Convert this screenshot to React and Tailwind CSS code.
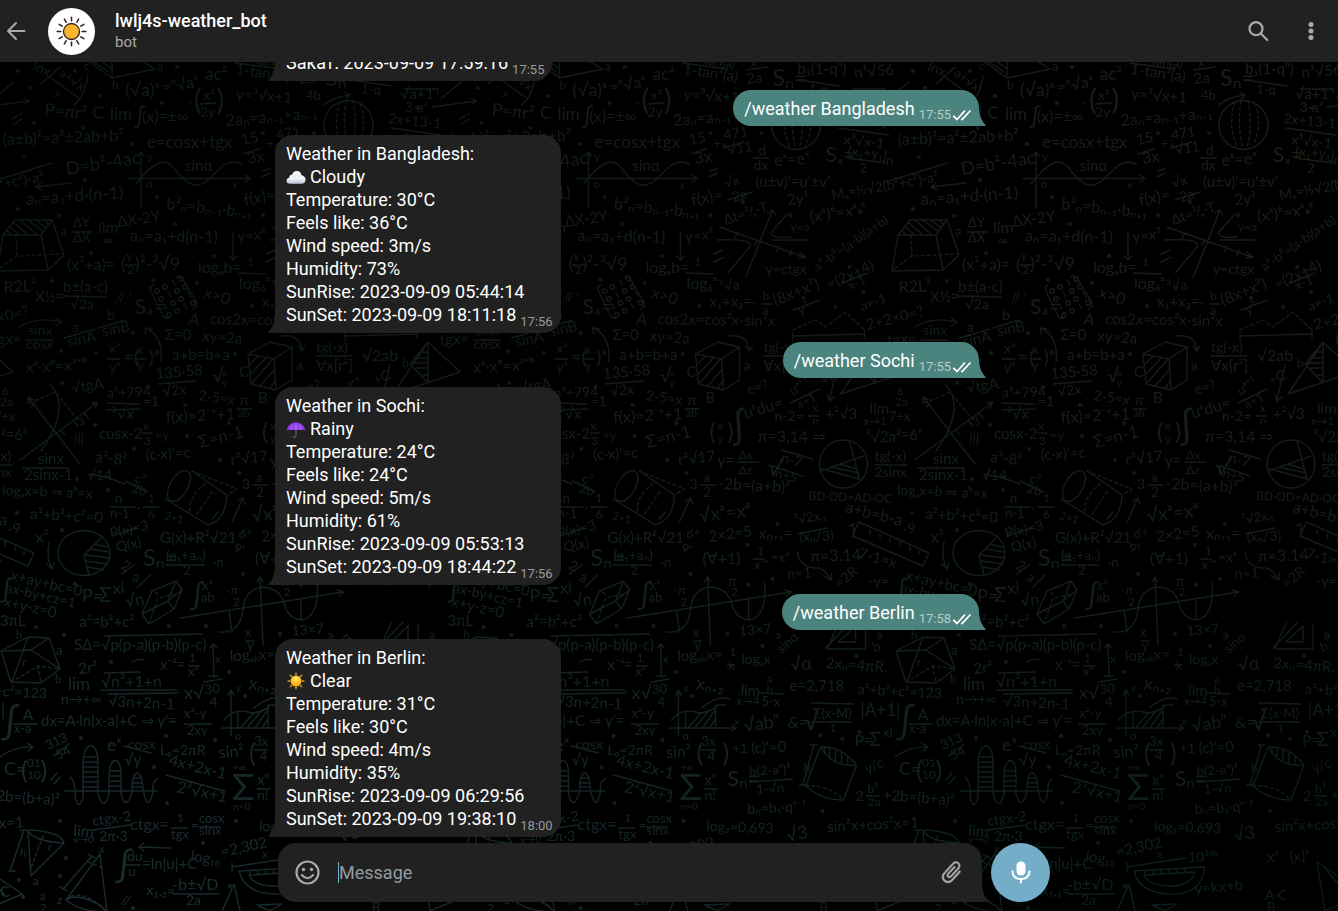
import React from "react";

const TILE = 447.5;

// Wallpaper formulas: [x, baseline, text, size, rotation]
const FORMULAS = [
  [32, 8, "lnx", 13, 22], [58, 13, "a+√x", 12, 36], [55, 35, "x", 11], [157, 9, "a", 12], [112, 27, "b", 11], [84, 8, "c", 10],
  [125, 34, "(√a)ˣ", 17], [163, 31, "=ⁿ√aˣ", 15, -10], [205, 18, "ac²", 16], [44, 53, "P=πr²", 16, 6], [92, 56, "C", 16, 5],
  [110, 58, "lim", 16], [134, 62, "∫", 22], [142, 60, "(x)=±∞", 15], [187, 45, "-", 14], [194, 48, "(  )", 28], [203, 38, "x²", 13], [200, 55, "2y", 13], [226, 64, "2aₙ=aₙ₋₁+aₙ₋₁", 15, -5], [236, 37, "y=³√x+1", 14, 4],
  [235, 12, "1-tan²(a)", 14, 8], [256, 2, "tan(a)", 12, 8], [303, 5, "x", 12], [299, 22, "2a", 14, -5], [306, 38, "4b", 12],
  [325, 24, "Sₙ=", 22], [350, 12, "b₁(1-qⁿ)", 14], [361, 31, "1-q", 12, 5], [407, 16, "n³√56", 14, -5], [400, 37, "√a+1", 14], [405, 50, "3-a²", 12],
  [388, 61, "2x+13-1", 13, 6], [396, 82, "x⁵√x-1", 13, 6], [378, 100, "Sₓ=", 20], [400, 94, "(x₁+y₁)", 13, 5], [412, 111, "2", 12], [435, 103, "·n", 12],
  [3, 83, "(a±b)²=a²±2ab+b²", 15, -2], [147, 86, "e=cosx+tgx", 16], [242, 83, "15", 14, -10], [248, 102, "3x", 15, -10], [266, 86, "+", 12],
  [277, 78, "471", 13, -10], [276, 93, "⁴√11", 13, -8], [311, 93, "d", 13], [306, 108, "dx", 13], [327, 104, "eˣ=eˣ", 15, -4],
  [67, 113, "D=b²-4ac", 17, -9], [185, 109, "sinα", 14], [147, 99, "y", 10], [232, 127, "x", 10], [146, 126, "o", 10],
  [26, 143, "aₙ=a₁+d·(n-1)", 16, -4], [166, 147, "b²ₙ=bₙ₋₁·bₙ₊₁", 15, 6], [245, 144, "f(x)=", 15, -12], [278, 126, "√x", 13, -15], [286, 140, "2a", 13, -15],
  [308, 125, "(u±v)'=u'±v'", 14], [340, 143, "2y³", 14, -5], [385, 138, "Mₐ=½√2(b²+c²)-a²", 13, -10], [278, 163, "Δt=²⁄ₓ-T", 13, -18], [363, 160, "(xᵃ)⁶=xᵃ·⁶", 15, -8],
  [60, 174, "a", 12], [73, 165, "ΔY", 12], [73, 180, "ΔX", 12], [98, 171, "lim", 15], [103, 183, "∞", 12], [118, 165, "ΔX-2Y", 14, -8],
  [130, 179, "aₙ=a₁+d(n-1)", 15, 1], [238, 180, "y=x²", 14, -6], [343, 169, "y=a", 11], [318, 212, "y=ctgx", 13], [370, 210, "a²-b²=(a-b)(a+b)", 12, -35],
  [67, 208, "(x²+a)=", 15], [121, 208, "(  )²-³√9", 17], [126, 198, "y", 11], [127, 212, "2", 11], [198, 211, "logₐb=", 15], [247, 204, "1", 11], [239, 227, "log₆ᵃ", 15], [272, 229, "³√a", 13, -5],
  [4, 231, "R2L²", 15, -4], [35, 240, "X½=", 14], [63, 230, "b±(a-c)", 14], [70, 247, "√2a", 13], [116, 240, "// '", 13], [135, 252, "S₄=", 20],
  [203, 235, "x>0", 15, 18], [262, 245, "x₁+x₂=-", 14], [315, 238, "b", 11], [315, 252, "a", 11], [328, 244, "(8x+x²)", 15, -22], [352, 253, "y²", 13, -20],
  [382, 228, "=(2x+4)", 14, -25], [402, 228, "x-1", 12, -22], [420, 268, "2+2×0=?", 14, -14], [210, 262, "cos2x=cos²x-sin²x", 14, 1], [415, 249, "a≠-1", 12, -20],
  [440, 283, "tgx=", 14, -3], [28, 273, "sinx", 13], [26, 287, "cosx", 13], [72, 270, "a", 13], [69, 285, "sinA", 14, -12], [107, 258, "b", 13], [103, 274, "sinB", 14, -10],
  [188, 262, "A", 15, 10], [165, 278, "Σ=0", 14], [202, 279, "xy=2a", 14, 4], [26, 311, "xᵃ·xᵇ=xᵃ⁺ᵇ", 15, -3], [109, 291, "xᵃ", 13], [109, 310, "yᵃ", 13], [123, 302, "=(  )ᵃ", 18], [137, 292, "x", 12], [137, 308, "y", 12],
  [172, 298, "a+b=b+a", 14], [156, 317, "135·58", 14, -5], [163, 334, "√2x", 13, -5], [212, 320, "√", 18], [222, 314, "x", 9], [222, 324, "y", 9],
  [239, 315, "C", 14], [258, 341, "B", 14], [296, 308, "a", 13], [316, 290, "tg(-x)", 13], [316, 309, "∀x[r²]", 14], [362, 299, "√2ab", 15], [402, 305, "b", 11], [301, 333, "e=?", 13, -18],
  [345, 334, "uᵃ⁺¹", 13, -30], [352, 347, "a+1", 11, -28], [376, 324, "+C", 13, -25],
  [2, 333, "6", 11], [0, 344, "2a", 11], [-6, 359, "7+x", 12], [72, 331, "√tgA", 14, -8], [107, 336, "a³+794", 13, -2], [112, 357, "³√x", 14], [143, 344, "=1", 13], [198, 338, "2-5=x", 13, 8], [240, 343, "π", 13], [238, 355, "ab", 10],
  [166, 361, "f(x)=2⁻ˣ+1", 15, -3], [99, 377, "cosx-2", 14], [143, 368, "x", 11], [144, 383, "3", 11], [155, 378, "=y", 12], [200, 386, "Σ=n-1", 16, -14], [74, 381, "|||", 12, 3], [80, 364, "3", 10, -25],
  [38, 402, "sinx", 14], [24, 418, "2sinx-1", 14], [95, 400, "a²-8²", 14, 6], [146, 398, "(c·x)'=c", 14, -3], [231, 403, "r²√17", 14, -6],
  [284, 378, "∫", 36, -10], [298, 357, "uᵃdu=", 15, -17], [327, 359, "n-2=", 13], [365, 350, "x", 10], [365, 363, "n", 10], [378, 357, "+²√3", 14], [422, 352, "lim", 14], [416, 363, "x→1", 10],
  [262, 378, "(  )", 22], [270, 368, "x", 10], [270, 381, "y", 10], [310, 380, "π=3,14 ⇒", 15], [418, 380, "³√2a²", 14], [453, 378, "=6ᵃ", 14], [270, 404, "y=", 14], [291, 397, "Δx", 11], [291, 412, "Δz", 11], [318, 412, "√", 24, 12], [333, 400, "n-7", 13, 15], [327, 415, "n+5", 12, 15],
  [427, 399, "tg(-x)", 13], [427, 415, "2sinx", 13], [87, 418, "√14", 13], [134, 420, "c²", 12, 15], [131, 430, "2b", 12, 15],
  [2, 433, "logₐx=b ⇒ aᵇ=x", 13, 2], [30, 457, "a²+b²+c²=0", 14, 3], [115, 441, "n", 12], [110, 456, "n-1", 12], [137, 450, "·", 12], [148, 440, "1", 11], [148, 456, "6", 11], [164, 457, "2+1", 10, 15],
  [160, 481, "G(x)+R²√21", 14], [111, 476, "P(x)=3", 13, -12], [117, 490, "Q(x)", 13, -12], [143, 504, "Sₙ=", 22], [166, 498, "(a₁+aₙ)", 13], [183, 513, "2", 12], [213, 505, "·n", 12],
  [36, 481, "x³", 15, -5], [8, 472, "-9", 13, -6], [120, 506, "2", 13, 30], [131, 518, "a", 13, 25], [242, 427, "3", 13], [256, 420, "a", 12], [256, 435, "2", 12], [270, 427, "-2b=(a+b)²", 15, 3],
  [252, 460, "√xᵃ=xᵃ", 18, -6], [262, 480, "2×2=5", 14, -8], [238, 475, "6²", 12, 15], [233, 490, "9ᵗ", 12, 15], [255, 502, "(∀+1)", 15], [311, 477, "xₙ₊₁=", 15], [347, 462, "³√2xₙ", 12, -8], [352, 480, "(xₙ/3)", 13, -3],
  [361, 438, "BD·OD=AD·OC", 11, 2], [397, 450, "a+b=b-a", 15, 14], [363, 500, "π=3.14", 15, -2], [410, 496, "7-1=x", 14, 15], [340, 517, "n=1", 13, -4], [310, 493, "1", 10], [307, 507, "x⁻ᵃ", 11], [323, 500, "=xᵃ", 13],
  [392, 527, "=2R", 13, -40], [421, 524, "-y=", 13], [10, 518, "x+ay+bc=0", 14, 13], [5, 530, "ax-by+cz=1", 13, 13], [3, 544, "x+y-z=0", 14, 13], [0, 536, "∫", 24],
  [82, 540, "P=", 17], [99, 540, "Σ", 20], [113, 532, "xi", 15, -5], [126, 545, "√n", 15, -8], [190, 543, "∫", 28], [202, 528, "x²", 12], [201, 540, "ab", 12], [226, 532, "-π", 11], [233, 544, "2", 11], [281, 524, "π", 12], [284, 534, "2", 10],
  [0, 564, "3πL", 14], [79, 565, "a²=b²+c²", 14], [74, 588, "SΔ=√p(p-a)(p-b)(p-c)", 14], [79, 612, "2r²", 14, -6], [160, 608, "x⁻ᵃ=", 14], [189, 600, "1", 11], [188, 614, "xᵃ", 12], [56, 593, "a", 12], [55, 621, "b", 10], [22, 604, "r", 11], [16, 577, "h", 10],
  [215, 601, "x", 11], [230, 599, "logₐₖx=", 14, -2], [282, 594, "1", 11], [281, 608, "k", 11], [294, 602, "logₐx", 13], [292, 574, "13×7", 13, -5], [245, 575, "x", 12], [247, 588, "y", 12], [330, 578, "a", 11, -35], [334, 592, "sinα", 12, -42],
  [343, 609, "√α", 17, -5], [378, 606, "2xₙ=4πR.", 14, 4], [342, 629, "e=2,718", 14], [410, 632, "a²+b²+c²=123", 13, 3], [427, 590, "b", 12, -20], [430, 578, "a", 12, -20],
  [68, 628, "lim", 16], [101, 625, "√n³+1+n", 15], [61, 642, "n→+∞", 13], [108, 644, "√3n+2n-1", 14, 3], [184, 637, "x√", 17], [205, 632, "30", 12, -5], [210, 645, "4", 12], [248, 627, "xₙ₊₂", 17, 8],
  [293, 633, "lim", 14, 4], [289, 643, "x→4", 10], [319, 621, "a", 11], [319, 632, "b", 11], [314, 644, "5-x", 12], [1, 672, "∫", 36], [23, 658, "A", 14], [14, 671, "x-a", 12], [41, 664, "dx=A·ln|x-a|+C ⇒ y'=", 14],
  [184, 656, "x²-y", 12], [187, 673, "2xy", 12], [297, 670, "√abⁿ", 17, -8], [340, 666, "&=", 15], [356, 668, "√", 24], [366, 656, "Σ(x-M)", 12], [382, 670, "1", 11], [413, 654, "|A+1|", 16], [236, 629, "y", 9], [235, 678, "o", 10], [287, 663, "x", 9],
  [48, 688, "313", 12, -25], [58, 698, "54", 12, -25], [107, 689, "eˣ", 17], [128, 687, "cosx", 13], [124, 703, "√y", 14], [160, 693, "L₀=2πR", 13], [219, 696, "sin²", 15, -4], [249, 700, "(   )", 24], [254, 684, "3x", 12], [260, 699, "4", 12], [285, 691, "+1", 12], [304, 691, "(c)'=0", 14, -2],
  [407, 684, "P=", 15], [422, 684, "Σ", 18], [435, 675, "xi", 13], [4, 713, "C=", 17], [21, 717, "(  )", 24], [27, 705, "01", 11], [27, 717, "10", 11],
  [168, 703, "4x+2x-1", 15, 14], [176, 730, "2³√x+1", 15, 12], [232, 738, "Σ", 36], [233, 709, "+∞", 9], [233, 748, "n=0", 9], [257, 723, "xⁿ", 14], [257, 738, "n!", 13],
  [280, 724, "Sₙ=", 20], [302, 714, "b(2-aⁿ)²", 12, -4], [309, 732, "1-√n", 12, -4], [300, 752, "bₙ=b₁·qⁿ⁻¹", 13, -3], [356, 710, "b", 11], [420, 712, "y/c", 13, -25],
  [408, 739, "2", 13], [420, 731, "b²", 11], [420, 744, "2a", 11], [435, 738, "+2b=(b+a)²", 14, 4], [380, 770, "sin²x+cos²x=1", 14, -3], [73, 774, "lim", 15, 4], [73, 781, "x→0", 9], [93, 764, "ctgx-2", 13, -8], [99, 779, "2π·3", 13],
  [130, 768, "ctgx=", 15], [177, 760, "1", 11], [171, 777, "tgx", 12], [191, 768, "=", 12], [199, 761, "cosx", 12], [199, 773, "sinx", 12], [259, 769, "log₂=0,693", 13, 2], [340, 780, "√3", 17, -12],
  [20, 795, "h", 10], [48, 789, "r", 10], [33, 823, "a", 10], [99, 791, "x", 10], [57, 842, "z", 11], [115, 815, "∫", 34], [127, 799, "du", 13], [128, 814, "u", 13], [142, 807, "=ln|u|+C", 14], [190, 799, "log₁₀", 14, 8], [222, 795, "=2,302", 14, -12],
  [146, 833, "x₁,₂=", 14, 3], [172, 828, "-b±√D", 15], [186, 843, "2a", 13], [262, 796, "x", 10], [40, 838, "a", 10], [40, 850, "2", 10], [0, 835, "C", 14], [120, 842, "//", 13, 15],
  [293, 800, "10¹⁰⁰", 13], [300, 832, "y=kx+b", 14, -5], [372, 800, "xᵃ", 14], [395, 800, "(x)ᵃ", 14, -5], [370, 838, "A·C", 13], [372, 850, "B", 12],
];

// Rules, arrows and outlines of the geometric figures
const FIGURES = [
  "M41 22L60 5M50 15L80 37M88 14Q84 36 74 43", "M90 0L112 16L155 7L135 -5M112 16V-5M94 0L109 10M98 -3L111 6", "M-15 45L28 39M24 36L29 39L25 42M-6 36L14 20",
  "M235 1L280 7M299 8L320 5M350 18L392 24M391 66L441 73M400 96L438 101M405 27H438V31M200 42L216 41", "M12 57L22 51M14 62L22 57",
  "M324 43Q333 35 349 33M345 30L350 33L346 37", "M243 92L259 87M276 86L297 80M306 96H321", "M141 146V90M138 94L141 90L144 94M128 116.500H249M245 113L250 116.500L245 120M136 122Q160 90 173 105Q188 125 198 123C215 120 220 93 242 102",
  "M438 120L500 101M71 121L36 125M41 121L36 125L42 128M280 138L305 130M262 109L270 107M262 115L270 111",
  "M3 173L15 158H52L41 173ZM3 173L-3 209L48 208L64 193L52 158M41 173L48 208M7 169L12 173M10 165L20 173M13 160L28 173M20 158L36 172M28 158L44 170M36 158L46 166M44 158L49 163",
  "M72 170H92M233 170V198M229 194L233 198L237 194M239 211L266 212M125 203H137M62 234L106 235M343 175Q322 177 324 170L340 152",
  "M272 165L357 195M352 190L358 195L351 196M298 216L325 148M320 151L325 148L328 153M270 178Q303 176 303 184L281 210M266 192L275 188M266 200L276 195M325 178H360M290 170L287 176M310 177L307 183M332 184L329 190M344 188L342 194",
  "M153 223Q149 225 151 229L163 254Q165 257 169 256M176 215Q180 213 182 216L197 241Q198 245 193 247M315 242H325M346 248L372 238M395 221L420 211",
  "M19 265Q38 254 61 260M56 256L62 260L56 264M26 278H53M64 276L95 267M98 266L125 258M146 266Q164 275 161 300M146 272L145 266L152 267",
  "M345 274L417 272M345 270V278M417 268V276M107 297H120M136 297H146M158 322L196 319", "M248 292L270 280L292 285V318L276 328L251 322ZM248 292L274 297L292 285M274 297L276 328M250 302L258 294M251 312L267 295M252 321L273 297M260 324L275 307M270 326L276 318",
  "M282 274Q300 272 302 288M298 284L302 289L305 284M316 294H352M428 280L410 302L428 321ZM428 280L393 332L460 310ZM420 290H428M416 296H428M412 301H428M416 306H428M423 313H428",
  "M107 341L139 342M107 348L140 347M343 341L372 327M20 398L98 340M92 341L98 340L95 346M28 335L80 402M28 341L28 335L34 338M50 322Q72 345 41 389M35 341L31 345M74 359L78 364M84 351L88 356M61 368L65 373M23 406L69 406M238 347H251M143 371H152M361 354H372M290 400H311M325 404L355 414M334 388L365 397M427 403H460M390 303L382 338M380 333L382 339L387 335",
  "M110 445H135M143 445H159M90 412Q108 415 125 422M253 423H268M125 419L148 430M192 409L227 433M166 437L208 463Q226 458 227 433M212 457L218 450",
  "M232 460L243 436M238 439L243 436L245 442M112 474L136 466M166 503H204M122 512L134 503M138 525L150 513", "M49 480Q46 498 52 506M47 502L52 507L54 501",
  "M-40 468L-36 460L34 491L28 504L-42 474ZM-25 468V472M-15 472V476M-5 476V480M5 480V484M15 485V488M24 489V492",
  "M406 462V475M402 464L406 462M350 490Q352 507 372 506Q378 508 383 517M376 514L384 518L384 511M351 472L380 466M306 497H316",
  "M84 493L101 476M84 493L89 513M95 482L107 485M90 487L109 490M86 493L110 496M86 499L108 502M88 505L104 508", "M142 552L152 529L176 519L182 528L174 547L149 562ZM142 552L168 539L182 528M168 539L174 547M168 539L176 519",
  "M180 556L343 530M337 528L344 530L339 534M260 515L263 583M257 520L260 515L263 520M219 570Q240 572 243 548Q244 528 262 525Q280 526 284 541Q288 557 302 558Q320 554 317 520M229 548L232 570M301 536V558",
  "M1 589L28 575L49 576L60 607L41 621L11 620ZM1 589L31 588L60 607M28 575L12 620M31 588L49 576", "M104 574L202 572M213 582L214 615M210 586L213 582L217 586M209 614H218M189 604H200M132 600Q138 596 144 598M246 579H254M104 611L140 610M101 628H177M108 632L178 631M204 620L222 617",
  "M14 662H37M184 662H211M222 666H288M284 663L289 666L284 669M231 629V674M228 633L231 628L234 633M224 658Q234 645 252 651Q265 650 270 643H278M254 646Q270 633 282 637M238 650V666M268 643V666M240 666L254 651M247 666L262 648M255 666L267 649M262 666L268 657",
  "M312 631L335 632M364 641L406 642M364 660H404M124 684L151 691M54 694L69 682M280 603H287M254 688H268M166 713L224 729M257 727H270M302 720L345 717M0 695Q15 684 32 685M27 681L33 685L28 689M51 718L57 711M54 722L60 715M419 734H432",
  "M373 685L358 724Q374 738 396 738L409 703M373 685Q394 684 409 703Q386 706 373 685ZM377 686V692M382 687V697M388 688V700M394 691V702M400 694V703M366 684L355 724M363 683H370M352 723H360",
  "M378 586L403 560M380 587Q388 567 392 560M380 587H418V562M391 580L408 564V580Z", "M65 729H157M70 715Q76 720 75 735Q79 750 83 735V702C83 678 98 678 98 700V732Q104 751 109 732V712C110 694 121 694 121 712V732Q126 750 132 730C132 705 142 705 143 728Q148 752 153 730Q152 718 158 717M84 695H98M83 700H98M83 705H98M83 710H98M83 715H98M83 720H98M83 725H98M109 709H121M109 714H121M109 719H121M109 724H121M133 716H142M133 721H142M133 725H142",
  "M93 768L130 763M171 766H187M199 765H220M24 768L10 809M9 809H15M20 768H27M28 769L31 814L64 781Q62 773 46 770Q30 767 28 769Q36 780 64 781", "M100 792L107 850M100 792L66 838M92 794L64 826M88 792L95 796M60 825L67 829M66 838Q75 830 100 843L107 850Q80 850 66 838M170 786L140 785M144 781L139 785L144 789M125 803H140M173 832H219",
  "M232 805L290 796M232 801V809M239 809L310 805Q306 834 275 832Q244 831 239 809ZM249 813L300 810Q296 824 275 824Q254 824 249 813ZM250 809V813M258 808V812M266 808V812M274 807V811M282 807V810M290 806V810", "M222 849L234 822L240 849M257 843L282 842L270 849ZM422 800L430 849L470 832ZM430 806L452 833",
];

const DASHED = [
  "M16 173L17 194L62 192M17 194L0 206", "M340 40Q332 62 342 84M346 39Q342 62 348 86M353 39Q358 62 352 86M360 42Q368 62 358 83", "M345 268L368 258L378 265L398 250L417 268", "M190 449Q188 435 207 420M192 409L237 427L227 433M197 452L212 430",
  "M30 341L55 330L78 358", "M11 620L38 604L60 607M38 604L41 621", "M158 532L152 529M149 562L158 536L176 532", "M358 724Q380 722 396 738", "M43 774L31 806M66 838Q80 824 107 850M88 800L103 806",
];

const DOTS = [[18, 9], [75, 9], [30, 26], [100, 34], [177, 5], [162, 41], [34, 61], [83, 66], [132, 82], [24, 95], [85, 118], [18, 147], [59, 154], [157, 135], [263, 71], [314, 71], [418, 46], [175, 162], [263, 153], [91, 191], [214, 194], [52, 219], [153, 218], [197, 221], [252, 244], [61, 289], [133, 271], [96, 291], [235, 292], [62, 321], [148, 325], [185, 343], [95, 363], [229, 361], [187, 374], [134, 387], [220, 398], [77, 417], [108, 428], [17, 451], [62, 468], [239, 411], [295, 140], [402, 205], [343, 153], [413, 150], [75, 522], [36, 565], [64, 573], [169, 564], [206, 564], [111, 600], [229, 610], [245, 634], [243, 512], [81, 676], [166, 674], [215, 678], [154, 705], [167, 741], [60, 759], [236, 759], [66, 796], [60, 814], [19, 818], [203, 781], [230, 824], [133, 846], [373, 673], [395, 677], [330, 462], [300, 483], [325, 517], [301, 523], [280, 572], [315, 584], [409, 594], [412, 670], [375, 749], [23, 835], [388, 245], [416, 230], [356, 236]];

function Wallpaper() {
  return (
    <svg aria-hidden="true" className="absolute inset-0 h-full w-full" preserveAspectRatio="none">
      <defs>
        <g id="formulas" fill="none" stroke="white" strokeWidth="1.400" strokeLinecap="round" strokeLinejoin="round">
          <g fill="white" stroke="none" className="font-['Lato','Noto_Sans','DejaVu_Sans',sans-serif]">
            {FORMULAS.map(([x, y, text, size, rotation], i) => (
              <text key={i} x={x} y={y} fontSize={size + 1} transform={rotation ? `rotate(${rotation} ${x} ${y})` : undefined} xmlSpace="preserve">
                {text}
              </text>
            ))}
          </g>
          {FIGURES.map((d) => <path key={d} d={d} />)}
          {DASHED.map((d) => <path key={d} d={d} strokeDasharray="3 3" />)}
          {DOTS.map(([x, y], i) => <circle key={i} cx={x} cy={y} r="1.300" />)}
          <circle cx="348.500" cy="63" r="24.500" />
          <ellipse cx="84" cy="491" rx="26" ry="22.500" />
          <ellipse cx="179" cy="424" rx="9" ry="17" transform="rotate(30 179 424)" />
          <circle cx="396" cy="402" r="24" />
          <path d="M402 379L412 417M373 409L416 394M375 407L412 417M384 405L411 411M392 402L409 407" />
          {[0, 1, 2, 3].map((row) => [0, 1, 2, 3].map((col) =>
            (row + col) % 3 === 2 ? (
              <path key={`${row}-${col}`} d={`M${156 + col * 8 + row * 4} ${226 - col * 4 + row * 8}l3 5`} />
            ) : (
              <circle key={`${row}-${col}`} cx={157 + col * 8 + row * 4} cy={229 - col * 4 + row * 8} r="2.200" />
            )
          ))}
        </g>
        <mask id="ink" maskUnits="userSpaceOnUse" x="0" y="0" width="100%" height="100%">
          {[-1, 0, 1, 2, 3, 4].map((n) => <use key={n} href="#formulas" x={n * TILE} />)}
        </mask>
        <linearGradient id="inkTop" x1="0" x2="1"><stop stopColor="#0e1917" /><stop offset="1" stopColor="#181d15" /></linearGradient>
        <linearGradient id="inkBottom" x1="0" x2="1"><stop stopColor="#1b2e32" /><stop offset="1" stopColor="#0b1b1b" /></linearGradient>
        <linearGradient id="fade" x2="0" y2="1"><stop offset="0.300" stopColor="black" /><stop offset="1" stopColor="white" /></linearGradient>
        <mask id="lower"><rect width="100%" height="100%" fill="url(#fade)" /></mask>
      </defs>
      <g mask="url(#ink)">
        <rect width="100%" height="100%" fill="url(#inkTop)" />
        <rect width="100%" height="100%" fill="url(#inkBottom)" mask="url(#lower)" />
      </g>
    </svg>
  );
}

function BotAvatar() {
  return (
    <svg viewBox="0 0 47 47" className="size-[47px]" role="img" aria-label="Sun">
      <circle cx="23.500" cy="23.500" r="23.500" fill="white" />
      {Array.from({ length: 12 }, (_, i) => (
        <path key={i} d="M23.500 9.200V12.800" stroke="#30201d" strokeWidth="1.500" strokeLinecap="round" transform={`rotate(${i * 30} 23.500 23.500)`} />
      ))}
      <circle cx="23.500" cy="23.500" r="8" fill="#fbb52b" stroke="#30201d" strokeWidth="1.300" />
    </svg>
  );
}

function Cloud() {
  return (
    <svg viewBox="0 0 20 20" className="size-5" role="img" aria-label="Cloud">
      <defs><linearGradient id="cloud" x2="0" y2="1"><stop stopColor="#ffffff" /><stop offset=".6" stopColor="#eef1f6" /><stop offset="1" stopColor="#b9c3d2" /></linearGradient></defs>
      <path d="M4 16.800C1.800 16.800.5 15.500.5 13.700C.5 12 1.700 10.800 3.300 10.700C3 8.500 4.600 7.500 6 7.800C6.800 5.300 8.500 4 10.800 4C13.700 4 15.400 6 15.500 8.300C18 8.700 19.600 10.500 19.600 12.700C19.600 15.200 17.800 16.800 15.500 16.800Z" fill="url(#cloud)" />
      <path d="M6 7.800Q8.300 8 8.500 10.500M9 8Q12 6.500 14 9.500" fill="none" stroke="#cfd6e1" strokeWidth=".7" />
    </svg>
  );
}

function Umbrella() {
  return (
    <svg viewBox="0 0 20 20" className="size-5" role="img" aria-label="Umbrella">
      <path d="M10 9V17Q9.800 19 7.500 18.300L7 17.300" fill="none" stroke="#6f6f76" strokeWidth="1" />
      <path d="M.8 11.500C1.500 6 5.500 3.400 10 3.400S18.500 6 19.200 11.500Q17.500 10.200 15.600 11.300Q12.800 9.800 10 11.300Q7.200 9.800 4.400 11.300Q2.500 10.200.8 11.500Z" fill="#8e3be8" />
      <path d="M10 3.400Q5 5.500 4.400 11.300Q7.200 9.800 10 11.300Q12.800 9.800 15.600 11.300Q15 5.500 10 3.400Z" fill="#a45af5" />
      <path d="M10 3.400Q7.500 6 7.300 10.500M10 3.400Q12.500 6 12.700 10.500M10 2V4" fill="none" stroke="#7129c4" strokeWidth=".7" />
    </svg>
  );
}

function Sun() {
  return (
    <svg viewBox="0 0 20 20" className="size-5" role="img" aria-label="Sun">
      <defs><radialGradient id="sun" cx=".5" cy=".3"><stop stopColor="#ffee65" /><stop offset="1" stopColor="#fbb31a" /></radialGradient></defs>
      {Array.from({ length: 8 }, (_, i) => (
        <path key={i} d="M10 .6L11 4H9Z" fill="#eea11c" transform={`rotate(${i * 45} 10 10)`} />
      ))}
      <circle cx="10" cy="10" r="5.500" fill="url(#sun)" />
    </svg>
  );
}

const iconFor = { Cloudy: Cloud, Rainy: Umbrella, Clear: Sun };

function Incoming({ time, className = "", children }) {
  return (
    <article className={`relative flex shrink-0 items-end gap-1 self-start rounded-br-[18px] bg-[#212121] pt-[7px] pr-2 pb-[5px] pl-[11px] ${className}`}>
      <div className="pb-0.5">{children}</div>
      <time className="text-[13px] leading-3 text-[#9a9a9a]">{time}</time>
      <svg aria-hidden="true" viewBox="0 0 7 18" className="absolute bottom-0 -left-[7px] h-[18px] w-[7px]">
        <path d="M7 0V18H1C0 18 .2 17 .8 16.500C5 12 6.500 7 7 0Z" fill="#212121" />
      </svg>
    </article>
  );
}

function Report({ city, sky, temperature, feels, wind, humidity, sunrise, sunset, time }) {
  const Icon = iconFor[sky];
  return (
    <Incoming time={time} className="rounded-t-[18px]">
      <p>Weather in {city}:</p>
      <p className="flex h-[23px] items-center gap-1"><Icon />{sky}</p>
      <p>Temperature: {temperature}°C</p>
      <p>Feels like: {feels}°C</p>
      <p>Wind speed: {wind}m/s</p>
      <p>Humidity: {humidity}%</p>
      <p className="-mr-4">SunRise: 2023-09-09 {sunrise}</p>
      <p>SunSet: 2023-09-09 {sunset}</p>
    </Incoming>
  );
}

function OutTail({ className }) {
  return (
    <svg aria-hidden="true" viewBox="0 0 7 18" className={`absolute bottom-0 -right-[7px] h-[18px] w-[7px] ${className}`}>
      <path d="M0 0V18H6C7 18 6.800 17 6.200 16.500C2 12 .5 7 0 0Z" fill="currentColor" />
    </svg>
  );
}

function Command({ city, time }) {
  return (
    <article className="relative flex h-9 shrink-0 items-end gap-1 self-end rounded-[18px] rounded-br-none bg-[#4b837f] pr-[7px] pb-[5px] pl-[11px]">
      <p className="pb-px">/weather {city}</p>
      <span className="flex items-center gap-px">
        <time className="text-[13px] leading-3 text-[#b5cdcb]">{time}</time>
        <svg viewBox="0 0 20 12" className="h-3 w-5" role="img" aria-label="Read" fill="none" stroke="white" strokeWidth="1.800">
          <path d="M1.300 6.800L5 10.500L13 1.500M9.300 10L10 10.500L18.500 1.500" />
        </svg>
      </span>
      <OutTail className="text-[#4b837f]" />
    </article>
  );
}

export default function App() {
  return (
    <div className="flex h-screen flex-col overflow-hidden bg-black font-['Roboto',sans-serif] text-[18px] leading-[23px] text-white">
      <header className="flex h-[62px] shrink-0 items-center bg-[#212121] pr-[15px] pl-1">
        <button type="button" aria-label="Back" className="mr-5 text-[#aaaaaa]">
          <svg viewBox="0 0 24 24" className="size-6" fill="none" stroke="currentColor" strokeWidth="2" strokeLinecap="round" strokeLinejoin="round">
            <path d="M20.500 12H4M12 4L4 12L12 20" />
          </svg>
        </button>
        <BotAvatar />
        <div className="ml-5 flex-1">
          <h1 className="text-[18px] leading-[22px] font-medium">lwlj4s-weather_bot</h1>
          <p className="text-[15px] leading-5 text-[#aaaaaa]">bot</p>
        </div>
        <button type="button" aria-label="Search" className="mr-7 text-[#aaaaaa]">
          <svg viewBox="0 0 26 26" className="size-[26px]" fill="none" stroke="currentColor" strokeWidth="2.200" strokeLinecap="round">
            <circle cx="11" cy="10.700" r="6.500" /><path d="M15.800 15.500L22.300 22" />
          </svg>
        </button>
        <button type="button" aria-label="More actions" className="text-[#aaaaaa]">
          <svg viewBox="0 0 24 24" className="size-6" fill="currentColor">
            <circle cx="12" cy="5.500" r="2.500" /><circle cx="12" cy="12" r="2.500" /><circle cx="12" cy="18.500" r="2.500" />
          </svg>
        </button>
      </header>

      <main className="relative flex min-h-0 flex-1 flex-col">
        <Wallpaper />
        <section aria-label="Messages" className="relative flex min-h-0 flex-1 flex-col justify-end overflow-hidden pb-1.5">
          <div className="mx-auto flex w-full max-w-[788px] shrink-0 flex-col gap-[9px] pr-[84px]">
            <Incoming time="17:55">
              <p>Закат: 2023-09-09 17:59:16</p>
            </Incoming>
            <Command city="Bangladesh" time="17:55" />
            <Report city="Bangladesh" sky="Cloudy" temperature={30} feels={36} wind={3} humidity={73} sunrise="05:44:14" sunset="18:11:18" time="17:56" />
            <Command city="Sochi" time="17:55" />
            <Report city="Sochi" sky="Rainy" temperature={24} feels={24} wind={5} humidity={61} sunrise="05:53:13" sunset="18:44:22" time="17:56" />
            <Command city="Berlin" time="17:58" />
            <Report city="Berlin" sky="Clear" temperature={31} feels={30} wind={4} humidity={35} sunrise="06:29:56" sunset="19:38:10" time="18:00" />
          </div>
        </section>

        <form className="relative mx-auto flex w-full max-w-[788px] gap-[9px] pr-[13px] pb-[9px] pl-[3px]" onSubmit={(e) => e.preventDefault()}>
          <div className="relative flex h-[59px] flex-1 items-center rounded-[18px] rounded-br-none bg-[#212121] px-4">
            <button type="button" aria-label="Emoji" className="mr-4 text-[#aaaaaa]">
              <svg viewBox="0 0 28 28" className="size-7" fill="none" stroke="currentColor" strokeWidth="2.200" strokeLinecap="round">
                <circle cx="13.500" cy="13.500" r="11" />
                <path d="M7.800 16Q13.500 22.500 19.200 16" strokeWidth="2" />
                <circle cx="9.500" cy="10.500" r="1.700" fill="currentColor" stroke="none" /><circle cx="17.500" cy="10.500" r="1.700" fill="currentColor" stroke="none" />
              </svg>
            </button>
            <span aria-hidden="true" className="h-[21px] w-px bg-[#74adc7]" />
            <input type="text" aria-label="Message" placeholder="Message" className="h-[23px] min-w-0 flex-1 bg-transparent outline-none placeholder:text-[#939ba2]" />
            <button type="button" aria-label="Attach file" className="text-[#aaaaaa]">
              <svg viewBox="0 0 28 28" className="size-7" fill="currentColor">
                <path transform="translate(14 13.500) rotate(42) scale(1.080) translate(-12.500 -12)" d="M16.500 6v11.500c0 2.210-1.790 4-4 4s-4-1.790-4-4V5c0-1.380 1.120-2.500 2.500-2.500s2.500 1.120 2.500 2.500v10.500c0 .55-.45 1-1 1s-1-.45-1-1V6H10v9.500c0 1.380 1.120 2.500 2.500 2.500s2.500-1.120 2.500-2.500V5c0-2.210-1.790-4-4-4S7 2.790 7 5v12.500c0 3.040 2.460 5.500 5.500 5.500s5.500-2.460 5.500-5.500V6h-1.500z" stroke="currentColor" strokeWidth=".5" />
              </svg>
            </button>
            <OutTail className="text-[#212121]" />
          </div>
          <button type="button" aria-label="Record voice message" className="flex size-[59px] items-center justify-center rounded-full bg-[#74adc7]">
            <svg viewBox="0 0 28 28" className="size-7" fill="none" stroke="white" strokeWidth="2" strokeLinecap="round">
              <rect x="9.500" y="2.500" width="9" height="14" rx="4.500" fill="white" stroke="none" />
              <path d="M5.500 12.500Q6 20 14 20Q22 20 22.500 12.500M14 20V23.500" />
            </svg>
          </button>
        </form>
      </main>
    </div>
  );
}
